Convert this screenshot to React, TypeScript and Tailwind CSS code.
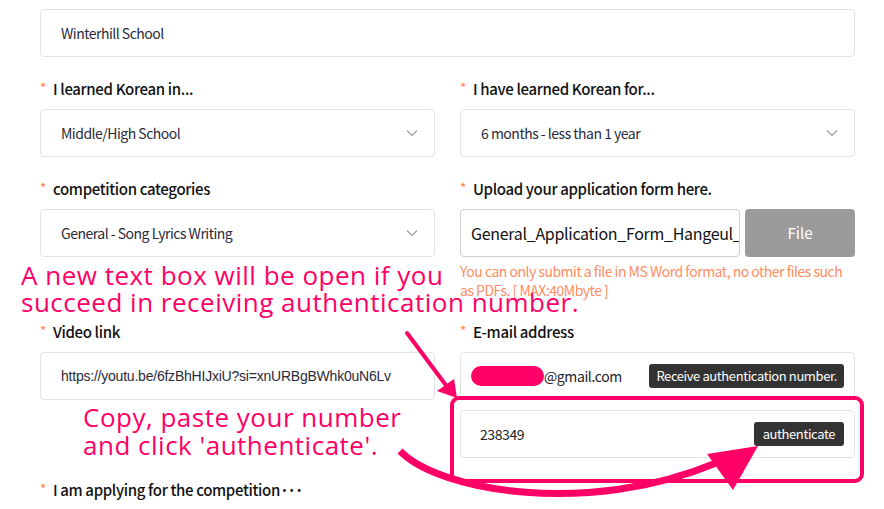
import React from "react";

const Chevron = () => (
  <svg width="12" height="8" viewBox="0 0 12 8" fill="none">
    <path d="M1 1.5 L6 6.5 L11 1.5" stroke="#9a9a9a" strokeWidth="1.1" />
  </svg>
);

const Label = ({ children }: { children: React.ReactNode }) => (
  <div className="mt-[22px] h-[20px] flex items-center text-[15px] tracking-[-0.35px] font-medium text-[#111]">
    <span className="text-[#ff8a5c] text-[13px] mr-[7px] -mt-[3px]">*</span>
    {children}
  </div>
);

const Select = ({ value }: { value: string }) => (
  <div className="mt-[10px] h-[48px] border border-[#e3e3e3] rounded-[4px] flex items-center justify-between pl-[20px] pr-[16px] text-[14px] tracking-[-0.5px] text-[#2a2a3a]">
    <span>{value}</span>
    <Chevron />
  </div>
);

export default function App() {
  return (
    <div
      className="relative w-[884px] h-[509px] overflow-hidden bg-white"
      style={{ fontFamily: '"Noto Sans CJK KR", "Noto Sans", sans-serif' }}
    >
      <div className="pl-[40px] pr-[29px] pt-[9px]">
        <div className="h-[48px] border border-[#e3e3e3] rounded-[4px] flex items-center pl-[20px] text-[14px] tracking-[-0.5px] text-[#2a2a3a]">
          Winterhill School
        </div>

        <div className="grid grid-cols-2 gap-x-[25px] items-start">
          <div>
            <Label>I learned Korean in...</Label>
            <Select value="Middle/High School" />
          </div>
          <div>
            <Label>I have learned Korean for...</Label>
            <Select value="6 months - less than 1 year" />
          </div>

          <div>
            <Label>competition categories</Label>
            <Select value="General - Song Lyrics Writing" />
          </div>
          <div>
            <Label>Upload your application form here.</Label>
            <div className="mt-[10px] flex gap-[5px]">
              <div className="w-[280px] h-[48px] border border-[#cfcfcf] rounded-[4px] flex items-center pl-[10px] overflow-hidden whitespace-nowrap text-[16px] tracking-[-0.3px] text-[#111]">
                General_Application_Form_Hangeul_
              </div>
              <div className="flex-1 h-[48px] rounded-[4px] bg-[#9b9b9b] flex items-center justify-center text-white text-[15px]">
                File
              </div>
            </div>
            <div className="mt-[5px] text-[14px] tracking-[-0.5px] leading-[19px] text-[#ff8d61]">
              You can only submit a file in MS Word format, no other files such as PDFs. [ MAX:40Mbyte ]
            </div>
          </div>

          <div>
            <Label>Video link</Label>
            <div
              className="mt-[10px] h-[48px] border border-[#e3e3e3] rounded-[4px] flex items-center pl-[20px] text-[14px] tracking-[-0.22px] text-[#2a2a3a]"
              style={{ fontFamily: '"Liberation Sans", Arial, sans-serif' }}
            >
              https://youtu.be/6fzBhHIJxiU?si=xnURBgBWhk0uN6Lv
            </div>
          </div>
          <div>
            <Label>E-mail address</Label>
            <div className="mt-[10px] h-[48px] border border-[#e3e3e3] rounded-[4px] flex items-center justify-between pl-[10px] pr-[10px]">
              <div className="flex items-center text-[14px] tracking-[-0.4px] text-[#222]">
                <span className="inline-block w-[73px] h-[20px] rounded-full bg-[#ff0066]" />
                <span>@gmail.com</span>
              </div>
              <div className="h-[24px] px-[7px] rounded-[3px] bg-[#333] text-white text-[13px] tracking-[-0.4px] flex items-center">
                Receive authentication number.
              </div>
            </div>
            <div className="mt-[10px] h-[48px] border border-[#e3e3e3] rounded-[4px] flex items-center justify-between pl-[19px] pr-[10px]">
              <span className="text-[14px] tracking-[-0.4px] text-[#222]">238349</span>
              <div className="h-[24px] px-[9px] rounded-[3px] bg-[#333] text-white text-[13px] tracking-[-0.4px] flex items-center">
                authenticate
              </div>
            </div>
          </div>

          <div>
            <Label>
              I am applying for the competition
              <span className="tracking-[-1.5px] font-bold">···</span>
            </Label>
          </div>
        </div>
      </div>

      {/* annotation box */}
      <div className="absolute left-[450px] top-[396px] w-[414px] h-[87px] border-[4px] border-[#ff0066] rounded-[9px] pointer-events-none" />

      {/* annotation texts */}
      <div
        className="absolute left-[21px] top-[262px] text-[26px] tracking-[0.5px] leading-[27px] text-[#ff0066] whitespace-nowrap"
        style={{ fontFamily: '"Open Sans", sans-serif' }}
      >
        <div>A new text box will be open if you</div>
        <div>succeed in receiving authentication number.</div>
      </div>
      <div
        className="absolute left-[83px] top-[403px] text-[26px] tracking-[0.5px] leading-[28px] text-[#ff0066] whitespace-nowrap"
        style={{ fontFamily: '"Open Sans", sans-serif' }}
      >
        <div>Copy, paste your number</div>
        <div>and click 'authenticate'.</div>
      </div>

      {/* arrows */}
      <svg className="absolute left-0 top-0 pointer-events-none" width="884" height="509" viewBox="0 0 884 509">
        <line x1="407" y1="333" x2="448" y2="388" stroke="#ff0066" strokeWidth="4" strokeLinecap="round" />
        <polygon points="437,391 457,398 454,379" fill="#ff0066" />
        <path d="M400 451 C 440 492, 590 516, 716 463" stroke="#ff0066" strokeWidth="7" fill="none" />
        <polygon points="707,454 758,446 733,490" fill="#ff0066" />
      </svg>
    </div>
  );
}
